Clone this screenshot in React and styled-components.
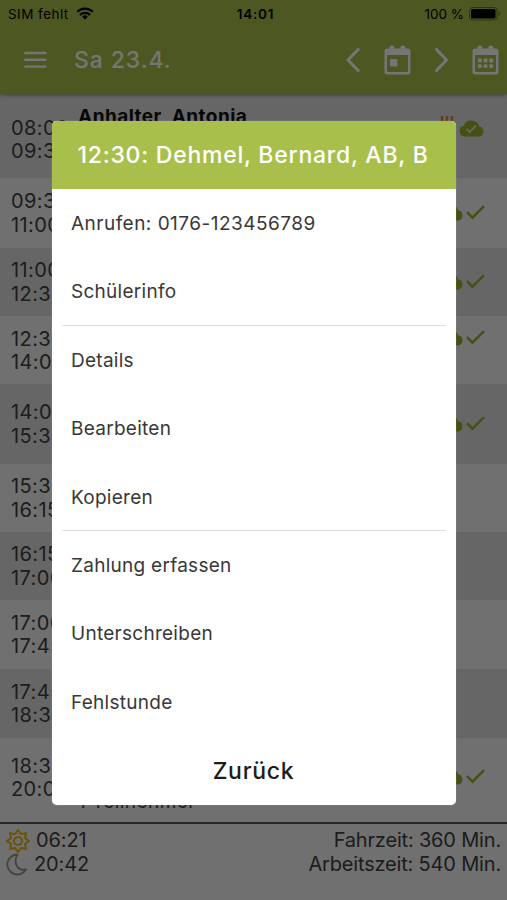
import React from 'react';
import styled, { createGlobalStyle } from 'styled-components';

const colors = {
    GREEN: '#a8bf4b',
    HEADER: '#a9be4b',
    ROW_LIGHT: '#f3f3f3',
    ROW_DARK: '#dedede',
    TEXT: '#404040',
    ICON: '#9aaf2f',
    SUN: '#e4b414',
};

const GlobalStyle = createGlobalStyle`
    * {
        box-sizing: border-box;
    }
    body {
        margin: 0;
        overflow: hidden;
        font-family: Inter, 'Liberation Sans', sans-serif;
        color: ${colors.TEXT};
    }
`;

const Screen = styled.div`
    position: relative;
    display: flex;
    flex-direction: column;
    height: 900px;
    overflow: hidden;
    background: ${colors.ROW_LIGHT};
`;

const Header = styled.header`
    position: relative;
    flex: none;
    height: 94px;
    background: ${colors.HEADER};
    box-shadow: 0 1px 4px rgba(0, 0, 0, 0.4);
`;

const StatusBar = styled.div`
    display: grid;
    grid-template-columns: 1fr auto 1fr;
    align-items: center;
    height: 27px;
    padding: 0 6px 0 8px;
    font-size: 13.5px;
    color: #000;
`;

const StatusSide = styled.div`
    display: flex;
    align-items: center;
    justify-content: ${props => (props.$end ? 'flex-end' : 'flex-start')};
    gap: ${props => (props.$end ? 5 : 7)}px;
    letter-spacing: ${props => (props.$end ? 0 : 0.45)}px;
`;

const Clock = styled.div`
    padding-left: 2px;
    font-weight: 600;
    letter-spacing: 0.8px;
`;

const Toolbar = styled.div`
    display: flex;
    align-items: center;
    height: 66px;
    padding: 0 8px 0 24px;
    color: #fff;
`;

const Title = styled.h1`
    flex: 1;
    margin: 0 0 0 27px;
    font-size: 23px;
    font-weight: 500;
    letter-spacing: 0.9px;
`;

const ToolbarIcons = styled.div`
    display: flex;
    align-items: center;
    gap: 23px;
`;

const List = styled.main`
    flex: none;
    height: 728px;
`;

const Row = styled.div`
    display: flex;
    align-items: center;
    height: ${props => props.$height}px;
    padding: 0 22px 0 11px;
    overflow: hidden;
    background: ${props => (props.$dark ? colors.ROW_DARK : colors.ROW_LIGHT)};
`;

const Times = styled.div`
    width: 67px;
    flex: none;
    padding-top: ${props => props.$shift || 0}px;
    padding-bottom: ${props => props.$lift || 0}px;
    font-size: 20px;
    line-height: 23.4px;
    letter-spacing: 0.4px;
`;

const Body = styled.div`
    flex: 1;
    align-self: stretch;
    display: flex;
    flex-direction: column;
    justify-content: space-between;
    padding: 11px 0 8px;
    font-size: 19px;
    line-height: 24px;
    letter-spacing: 0.45px;
`;

const Name = styled.div`
    font-weight: 700;
    color: #111;
`;

const RowIcons = styled.div`
    display: flex;
    align-items: center;
    gap: ${props => (props.$wide ? 5 : 3)}px;
    padding-right: ${props => (props.$wide ? 1 : 0)}px;
    padding-bottom: ${props => props.$lift || 0}px;
`;

const Footer = styled.footer`
    display: flex;
    justify-content: space-between;
    flex: 1;
    padding: 5px 6px 0;
    border-top: 2px solid #555;
    font-size: 20px;
    line-height: 23.5px;
`;

const FooterColumn = styled.div`
    text-align: ${props => (props.$right ? 'right' : 'left')};
    letter-spacing: ${props => (props.$right ? -0.18 : -0.1)}px;
`;

const SunTime = styled.div`
    display: flex;
    align-items: center;
    height: 23.5px;
    gap: 6px;
`;

const Overlay = styled.div`
    position: absolute;
    inset: 0;
    display: flex;
    justify-content: center;
    align-items: flex-start;
    padding-top: 121px;
    background: rgba(0, 0, 0, 0.54);
`;

const Dialog = styled.div`
    width: 404px;
    height: 683.5px;
    overflow: hidden;
    border-radius: 5px;
    background: #fff;
    color: #383838;
    box-shadow: 0 0 1px rgba(255, 255, 255, 0.6);
`;

const DialogTitle = styled.div`
    height: 68px;
    padding-left: 26px;
    background: ${colors.GREEN};
    color: #fff;
    font-size: 23px;
    font-weight: 500;
    line-height: 68px;
    letter-spacing: 0.75px;
    white-space: nowrap;
`;

const MenuGroup = styled.div`
    margin: 0 10px;
    box-shadow: ${props => (props.$last ? 'none' : 'inset 0 -1px #dedede')};
`;

const MenuItem = styled.div`
    height: 68.4px;
    padding-left: 9.5px;
    font-size: 19px;
    line-height: 70.4px;
    letter-spacing: ${props => (props.$phone ? 0.48 : 0.27)}px;
`;

const BackButton = styled.div`
    font-size: 23px;
    font-weight: 500;
    line-height: 70px;
    letter-spacing: 0.7px;
    text-align: center;
    color: #1c1c1c;
`;

const Wifi = () => (
    <svg width="18" height="13" viewBox="0 0 18 13" fill="none" stroke="#000" strokeWidth="2.2">
        <path d="M1.2 4.8a11 11 0 0 1 15.6 0M4 7.9a7 7 0 0 1 10 0" />
        <path d="M6.2 9.7a4 4 0 0 1 5.6 0L9 12.7z" fill="#000" stroke="none" />
    </svg>
);

const Battery = () => (
    <svg width="32" height="14" viewBox="0 0 32 14">
        <rect x="0.5" y="0.5" width="27.5" height="12.5" rx="3" fill="none" stroke="#000" strokeOpacity="0.4" />
        <rect x="2" y="2" width="24.5" height="9.5" rx="1.5" />
        <path d="M29.5 4.5q1.6.8 1.6 2.3t-1.6 2.3z" fillOpacity="0.4" />
    </svg>
);

const MenuIcon = () => (
    <svg width="23" height="18" viewBox="0 0 23 18" stroke="#fff" strokeWidth="2.4" strokeLinecap="round">
        <path d="M1.3 2h20.2M1.3 8.8h20.2M1.3 15.6h20.2" />
    </svg>
);

const Chevron = ({ right }) => (
    <svg width="15" height="28" viewBox="0 0 15 28" fill="none" stroke="#fff" strokeWidth="3">
        <path d={right ? 'M1.5 2.5 12.5 14 1.5 25.5' : 'M13 2.5 2 14 13 25.5'} />
    </svg>
);

const Calendar = ({ grid }) => (
    <svg width="27" height="31" viewBox="0 0 27 31" fill="#fff">
        <rect x="5.5" y="0.5" width="4.6" height="7" rx="1.8" />
        <rect x="16.5" y="0.5" width="4.6" height="7" rx="1.8" />
        <path fillRule="evenodd" d="M3 3.5h21q2.5 0 2.5 2.5v21q0 2.5-2.5 2.5H3q-2.5 0-2.5-2.5V6Q.5 3.5 3 3.5zM3 10v16q0 1 1 1h19q1 0 1-1V10z" />
        {grid
            ? [13.5, 19.2].map(y => [5.9, 11.6, 17.3].map(x => (
                <rect key={`${x}-${y}`} x={x} y={y} width="3.9" height="3.9" rx="1" />
            )))
            : <rect x="6" y="14" width="7.5" height="7.5" rx="1.2" />}
    </svg>
);

const Cloud = ({ checked }) => (
    <svg width="25" height="17" viewBox="0 0 25 17">
        <path
            d="M6 16.5a5.5 5.5 0 0 1-1.3-10.8A8.2 8.2 0 0 1 20.2 6.2 5.2 5.2 0 0 1 19.5 16.5z"
            fill={colors.ICON}
        />
        {checked && <path d="m7.5 8.8 3.3 3.2 6-6.3" fill="none" stroke="#dedede" strokeWidth="1.8" />}
    </svg>
);

const Check = () => (
    <svg width="19" height="15" viewBox="0 0 19 15" fill="none" stroke={colors.ICON} strokeWidth="2.5">
        <path d="m1 7.2 5.5 5.5L18 1.2" />
    </svg>
);

const Waves = () => (
    <svg width="14" height="24" viewBox="0 0 14 24" fill="none" stroke="#cf8a30" strokeWidth="2.4">
        <path d="M2 0v4l-1 4 1 4M7 0v4l-1 4 1 4M12 0v4l-1 4 1 4" />
    </svg>
);

const Sun = () => (
    <svg width="24" height="24" viewBox="0 0 24 24" fill="none" stroke={colors.SUN} strokeWidth="2">
        <path d="m12 1 2.9 3.9 4.9-.7-.7 4.9L23 12l-3.9 2.9.7 4.9-4.9-.7L12 23l-2.9-3.9-4.9.7.7-4.9L1 12l3.9-2.9-.7-4.9 4.9.7z" />
        <circle cx="12" cy="12" r="4" />
    </svg>
);

const Moon = () => (
    <svg width="22" height="23" viewBox="0 0 22 23" fill="none" stroke="#929292" strokeWidth="1.8" strokeLinejoin="round">
        <path d="M11.5 1.5A10 10 0 1 0 20 16.5Q14.5 17.8 11.5 14 7.5 8 11.5 1.5z" />
    </svg>
);

const lessons = [
    { from: '08:00', to: '09:30', height: 84, shift: 8, name: 'Anhalter, Antonia', state: 'synced', lift: 16 },
    { from: '09:30', to: '11:00', height: 70, shift: 1, state: 'done', lift: 2 },
    { from: '11:00', to: '12:30', height: 68, shift: 1, state: 'done', lift: 2 },
    { from: '12:30', to: '14:00', height: 68, shift: 2, state: 'done', lift: 25 },
    { from: '14:00', to: '15:30', height: 80, shift: 1, state: 'done', lift: 1 },
    { from: '15:30', to: '16:15', height: 68, shift: 1 },
    { from: '16:15', to: '17:00', height: 68, shift: 1 },
    { from: '17:00', to: '17:45', height: 69, shift: 1 },
    { from: '17:45', to: '18:30', height: 69, shift: 1 },
    { from: '18:30', to: '20:00', height: 84, timesLift: 4, note: '1 Teilnehmer', state: 'done', lift: 8 },
];

const menu = [
    ['Anrufen: 0176-123456789', 'Schülerinfo'],
    ['Details', 'Bearbeiten', 'Kopieren'],
    ['Zahlung erfassen', 'Unterschreiben', 'Fehlstunde'],
];

const Lesson = ({ lesson, dark }) => {
    const synced = lesson.state === 'synced';

    return (
        <Row $height={lesson.height} $dark={dark}>
            <Times $shift={lesson.shift} $lift={lesson.timesLift}>
                <div>{lesson.from}</div>
                <div>{lesson.to}</div>
            </Times>
            <Body>
                <Name>{lesson.name}</Name>
                <div>{lesson.note}</div>
            </Body>
            {lesson.state && (
                <RowIcons $lift={lesson.lift} $wide={synced}>
                    {synced ? <Waves /> : <Cloud />}
                    {synced ? <Cloud checked /> : <Check />}
                </RowIcons>
            )}
        </Row>
    );
};

const App = () => (
    <>
        <GlobalStyle />
        <Screen>
            <Header>
                <StatusBar>
                    <StatusSide>
                        SIM fehlt
                        <Wifi />
                    </StatusSide>
                    <Clock>14:01</Clock>
                    <StatusSide $end>
                        100 %
                        <Battery />
                    </StatusSide>
                </StatusBar>
                <Toolbar>
                    <MenuIcon />
                    <Title>Sa 23.4.</Title>
                    <ToolbarIcons>
                        <Chevron />
                        <Calendar />
                        <Chevron right />
                        <Calendar grid />
                    </ToolbarIcons>
                </Toolbar>
            </Header>
            <List>
                {lessons.map((lesson, index) => (
                    <Lesson key={lesson.from} lesson={lesson} dark={index % 2 === 0} />
                ))}
            </List>
            <Footer>
                <FooterColumn>
                    <SunTime>
                        <Sun />
                        06:21
                    </SunTime>
                    <SunTime>
                        <Moon />
                        20:42
                    </SunTime>
                </FooterColumn>
                <FooterColumn $right>
                    <div>Fahrzeit: 360 Min.</div>
                    <div>Arbeitszeit: 540 Min.</div>
                </FooterColumn>
            </Footer>
            <Overlay>
                <Dialog>
                    <DialogTitle>12:30: Dehmel, Bernard, AB, B</DialogTitle>
                    {menu.map((group, index) => (
                        <MenuGroup key={group[0]} $last={index === menu.length - 1}>
                            {group.map(item => (
                                <MenuItem key={item} $phone={item.startsWith('Anrufen')}>{item}</MenuItem>
                            ))}
                        </MenuGroup>
                    ))}
                    <BackButton>Zurück</BackButton>
                </Dialog>
            </Overlay>
        </Screen>
    </>
);

export default App;
